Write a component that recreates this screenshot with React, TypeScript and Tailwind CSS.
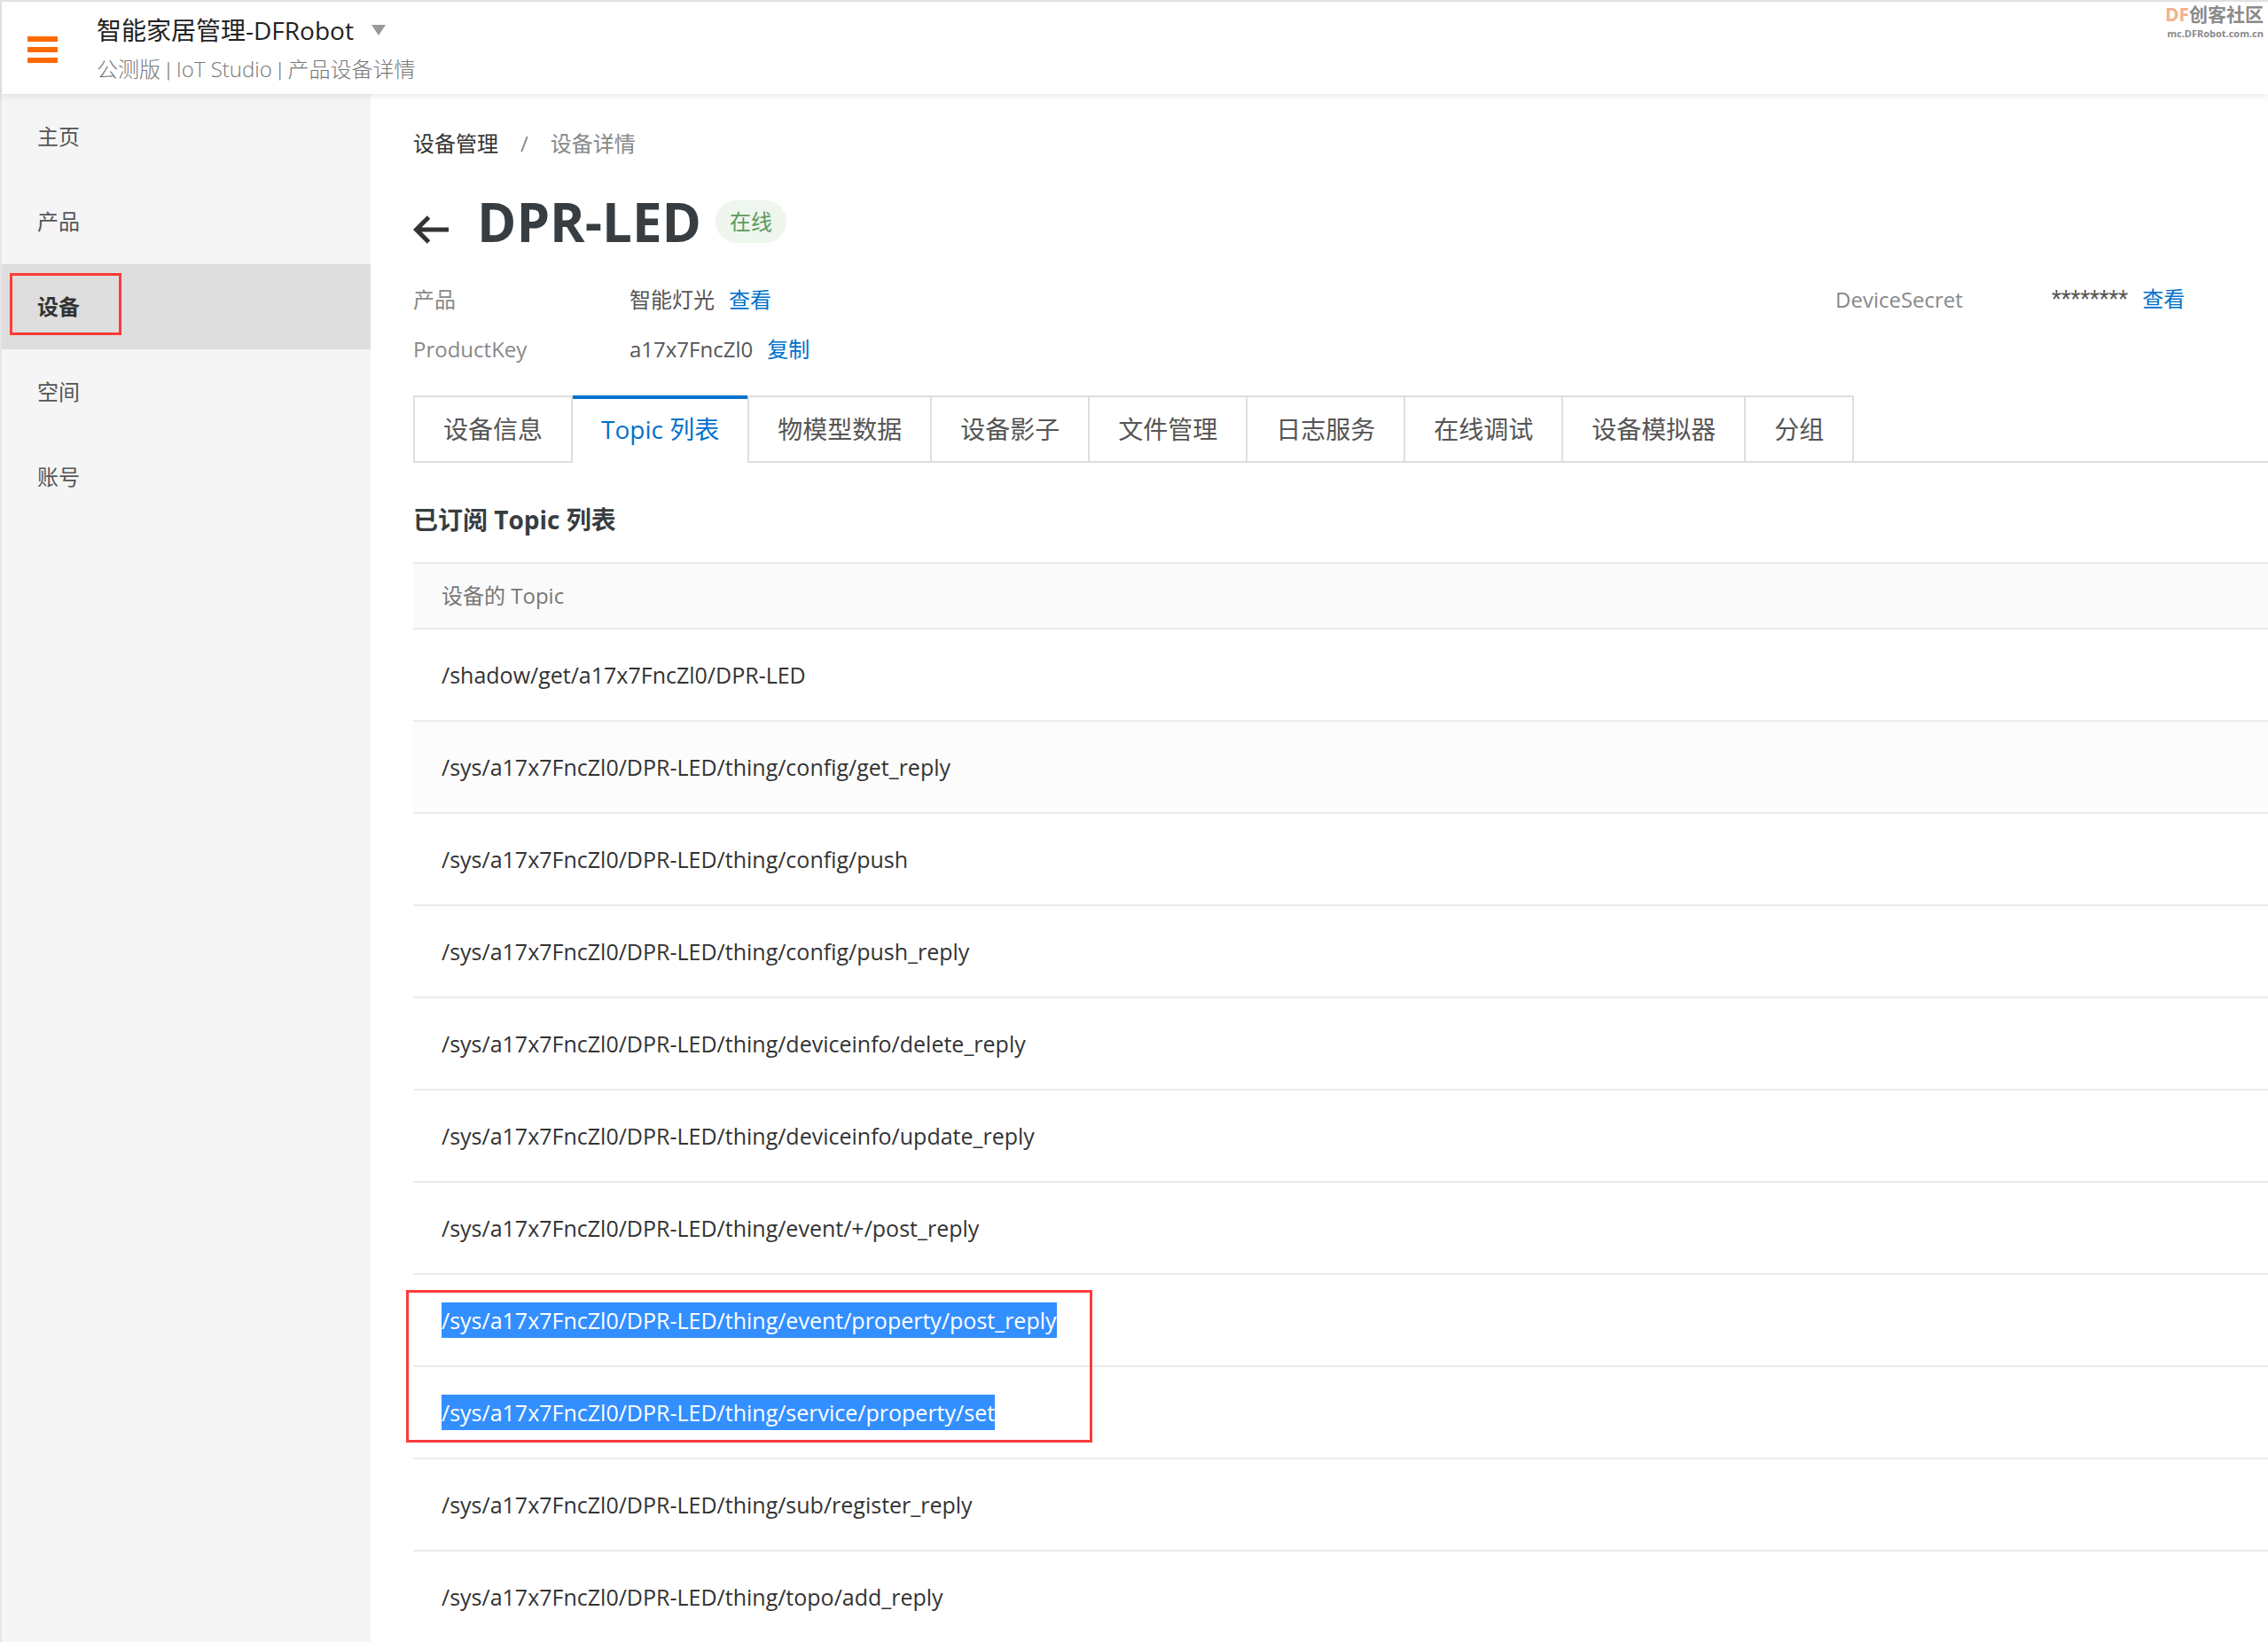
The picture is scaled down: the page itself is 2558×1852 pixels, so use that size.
import React from "react";

const navItems = ["主页", "产品", "设备", "空间", "账号"];

const tabs = [
  "设备信息",
  "Topic 列表",
  "物模型数据",
  "设备影子",
  "文件管理",
  "日志服务",
  "在线调试",
  "设备模拟器",
  "分组",
];

const topics = [
  "/shadow/get/a17x7FncZl0/DPR-LED",
  "/sys/a17x7FncZl0/DPR-LED/thing/config/get_reply",
  "/sys/a17x7FncZl0/DPR-LED/thing/config/push",
  "/sys/a17x7FncZl0/DPR-LED/thing/config/push_reply",
  "/sys/a17x7FncZl0/DPR-LED/thing/deviceinfo/delete_reply",
  "/sys/a17x7FncZl0/DPR-LED/thing/deviceinfo/update_reply",
  "/sys/a17x7FncZl0/DPR-LED/thing/event/+/post_reply",
  "/sys/a17x7FncZl0/DPR-LED/thing/event/property/post_reply",
  "/sys/a17x7FncZl0/DPR-LED/thing/service/property/set",
  "/sys/a17x7FncZl0/DPR-LED/thing/sub/register_reply",
  "/sys/a17x7FncZl0/DPR-LED/thing/topo/add_reply",
];

const HOVERED = 1;
const SELECTED = [7, 8];

function Header() {
  return (
    <header className="relative z-10 flex h-[104px] items-center bg-white shadow-[0_2px_8px_rgba(0,0,0,0.10)]">
      <button type="button" aria-label="菜单" className="ml-[29px] mt-1">
        <svg width="34" height="30" viewBox="0 0 34 30" fill="#ff6a00">
          <rect width="34" height="6" />
          <rect y="12" width="34" height="6" />
          <rect y="24" width="34" height="6" />
        </svg>
      </button>
      <div className="ml-11 mt-1 flex flex-col">
        <button type="button" className="flex items-center gap-5 text-[28px] leading-[44px] text-[#222]">
          智能家居管理-DFRobot
          <svg width="16" height="12" viewBox="0 0 16 12" fill="#999">
            <path d="M0 0h16L8 12z" />
          </svg>
        </button>
        <p className="text-2xl leading-[44px] font-light text-[#777]">
          公测版 <span className="font-['Roboto']">|</span> IoT Studio <span className="font-['Roboto']">|</span> 产品设备详情
        </p>
      </div>
      <div className="absolute right-[5px] top-0 text-right font-bold text-[#8a8a8a]">
        <p className="text-[21px] leading-[28px]">
          <span className="text-[#f3b08c]">DF</span>创客社区
        </p>
        <p className="text-[11px] leading-4">mc.DFRobot.com.cn</p>
      </div>
    </header>
  );
}

function Sidebar() {
  return (
    <nav className="w-[416px] shrink-0 bg-[#f5f5f5]">
      {navItems.map((item) =>
        item === "设备" ? (
          <a key={item} href="#" aria-current="page" className="relative flex h-24 items-center bg-[#dedede] pl-10 text-2xl font-bold text-[#333]">
            {item}
            <span className="absolute left-[9px] top-[10px] h-[70px] w-[126px] border-3 border-[#ff3a3a]" />
          </a>
        ) : (
          <a key={item} href="#" className="flex h-24 items-center pl-10 text-2xl text-[#555]">
            {item}
          </a>
        ),
      )}
    </nav>
  );
}

function Info({ label, value, action }: { label: string; value: React.ReactNode; action: string }) {
  return (
    <div className="flex h-14 items-center text-2xl">
      <dt className="w-[244px] text-[#888]">{label}</dt>
      <dd className="flex gap-4 text-[#555]">
        {value}
        <a href="#" className="text-[#0070cc]">
          {action}
        </a>
      </dd>
    </div>
  );
}

function Tabs() {
  return (
    <div role="tablist" className="mt-6 flex text-[28px] leading-10">
      {tabs.map((tab, i) =>
        i === 1 ? (
          <button key={tab} type="button" role="tab" aria-selected="true" className="relative h-[76px] border-r-2 border-[#dedede] px-8 text-[#0070cc]">
            <span className="absolute inset-x-0 top-0 h-1 bg-[#0070cc]" />
            {tab}
          </button>
        ) : (
          <button key={tab} type="button" role="tab" aria-selected="false" className="h-[76px] border-y-2 border-r-2 border-[#dedede] px-8 text-[#555] first:border-l-2">
            {tab}
          </button>
        ),
      )}
      <div className="flex-1 border-b-2 border-[#dedede]" />
    </div>
  );
}

function TopicTable() {
  return (
    <table className="w-full border-separate border-spacing-0 text-left leading-10">
      <thead>
        <tr>
          <th className="border-y-2 border-[#ebebeb] bg-[#fafafa] px-8 py-4 text-2xl leading-10 font-normal text-[#777]">设备的 Topic</th>
        </tr>
      </thead>
      <tbody>
        {topics.map((topic, i) => (
          <tr key={topic} className="group">
            <td
              className={
                "relative border-b-2 border-[#ebebeb] px-8 py-[31px] text-[25px] leading-10 text-[#333] group-last:border-b-0" +
                (i === HOVERED ? " bg-[#fcfcfc]" : "")
              }
            >
              {SELECTED.includes(i) ? <span className="inline-block bg-[#338fff] align-top text-white">{topic}</span> : topic}
              {i === SELECTED[0] && (
                <span className="absolute -left-2 top-[17px] z-10 h-[172px] w-[774px] border-3 border-[#ff3a3a]" />
              )}
            </td>
          </tr>
        ))}
      </tbody>
    </table>
  );
}

export default function App() {
  return (
    <div className="flex min-h-screen flex-col border-l-2 border-t-2 border-[#e6e6e6] bg-white font-['Open_Sans','Noto_Sans_CJK_SC',sans-serif]">
      <Header />
      <div className="flex flex-1">
        <Sidebar />
        <main className="min-w-0 flex-1 pl-12">
          <nav aria-label="面包屑" className="mt-9 flex h-10 items-center gap-[25px] text-2xl">
            <a href="#" className="text-[#333]">
              设备管理
            </a>
            <span className="text-[#888]">/</span>
            <span className="text-[#888]">设备详情</span>
          </nav>
          <div className="mt-7 flex h-20 items-center">
            <button type="button" aria-label="返回" className="mt-[18px]">
              <svg width="40" height="32" viewBox="0 0 40 32" fill="none" stroke="#333" strokeWidth="5">
                <path d="M3 16h37M17.500 2 3.500 16l14 14" />
              </svg>
            </button>
            <h1 className="ml-8 text-[60px] leading-[80px] font-bold text-[#373d41]">DPR-LED</h1>
            <span className="ml-4 flex h-12 items-center rounded-full bg-[#eef6ee] px-4 text-2xl text-[#5c9a5f]">在线</span>
          </div>
          <dl className="mt-5 grid grid-cols-[1604fr_488fr]">
            <Info label="产品" value="智能灯光" action="查看" />
            <Info label="DeviceSecret" value={<span className="font-['Roboto'] text-[25px]">********</span>} action="查看" />
            <Info label="ProductKey" value="a17x7FncZl0" action="复制" />
          </dl>
          <Tabs />
          <h2 className="mt-11 mb-7 text-[28px] leading-10 font-bold text-[#373d41]">已订阅 Topic 列表</h2>
          <TopicTable />
        </main>
      </div>
    </div>
  );
}
